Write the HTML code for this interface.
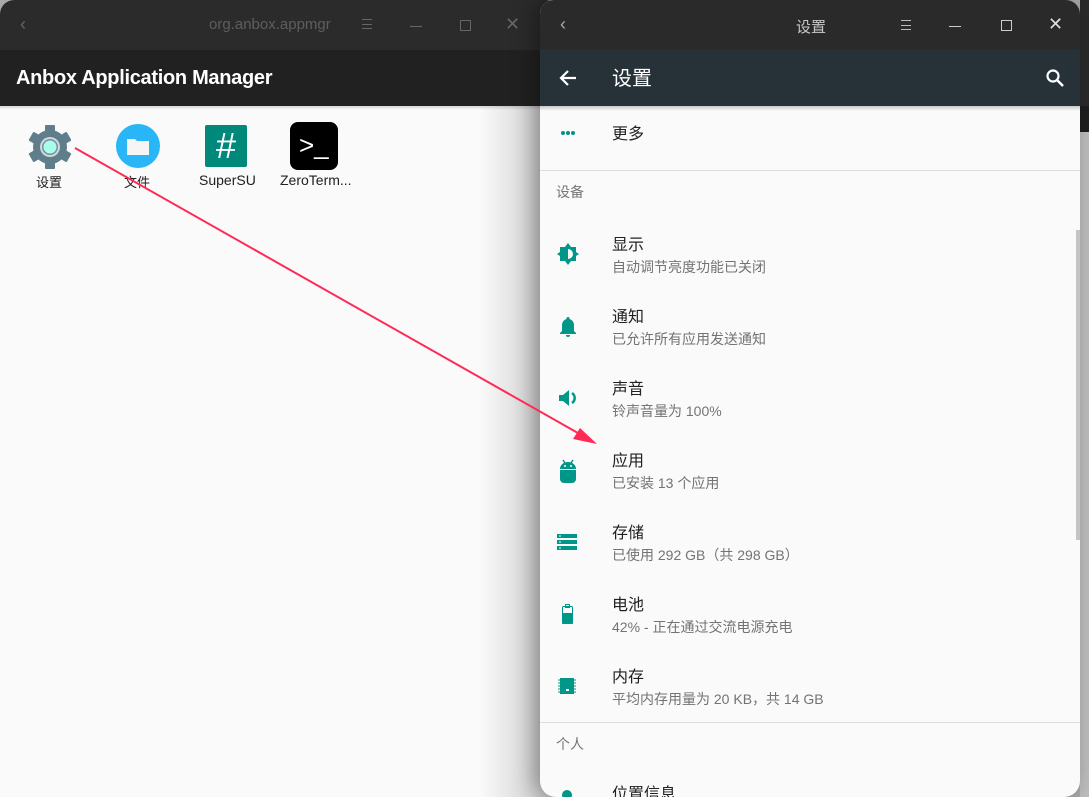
<!DOCTYPE html>
<html><head><meta charset="utf-8"><style>
*{margin:0;padding:0;box-sizing:border-box}
body{width:1089px;height:797px;overflow:hidden;background:#a8a8a8;font-family:"Liberation Sans","Noto Sans CJK SC",sans-serif;position:relative}
.abs{position:absolute}
.lw{left:0;top:0;width:560px;height:797px;background:#fafafa;border-radius:14px 14px 0 0;overflow:hidden}
.tb{left:0;top:0;height:50px;background:#2b2b2b;width:100%}
.rw{left:540px;top:0;width:540px;height:797px;background:#fafafa;border-radius:14px 14px 16px 16px;overflow:hidden;box-shadow:-6px 0 22px rgba(0,0,0,.35)}
.t{font-size:16px;color:#212121;left:72px;line-height:20px}
.s{font-size:14px;color:#737373;left:72px;line-height:18px}
.h{font-size:14px;color:#757575;left:16px}
</style></head><body>
<div class="abs" style="left:1080px;top:0;width:9px;height:106px;background:#2a2a2a"></div>
<div class="abs" style="left:1080px;top:106px;width:9px;height:26px;background:#1e1e1e"></div>
<div class="abs" style="left:1080px;top:132px;width:9px;height:665px;background:#bdbdbd"></div>

<div class="abs lw">
 <div class="abs tb"></div>
 <div class="abs" style="left:20px;top:14px;color:#666;font-size:18px">&#8249;</div>
 <div class="abs" style="left:209px;top:16px;color:#5e5e5e;font-size:15px">org.anbox.appmgr</div>
 <div class="abs" style="left:362px;top:19px;width:10px;height:10px;border-top:1px solid #666;border-bottom:1px solid #666"></div>
 <div class="abs" style="left:362px;top:24px;width:10px;height:1px;background:#666"></div>
 <div class="abs" style="left:410px;top:26px;width:12px;height:1px;background:#666"></div>
 <div class="abs" style="left:460px;top:20px;width:11px;height:11px;border:1px solid #666"></div>
 <div class="abs" style="left:505px;top:14px;color:#666;font-size:18px">&#10005;</div>
 <div class="abs" style="left:0;top:50px;width:100%;height:56px;background:#212121"></div>
 <div class="abs" style="left:16px;top:67px;color:#fff;font-size:20px;font-weight:bold;letter-spacing:-.3px">Anbox Application Manager</div>
 <div class="abs" style="left:0;top:106px;width:100%;height:4px;background:linear-gradient(rgba(0,0,0,.15),rgba(0,0,0,0))"></div>
 <div class="abs" style="left:480px;top:106px;width:80px;height:691px;background:linear-gradient(90deg,rgba(0,0,0,0),rgba(0,0,0,.22))"></div>
 <svg class="abs" style="left:27px;top:124px" width="46" height="46" viewBox="0 0 46 46">
  <g fill="#607d8b" transform="translate(23 23)">
   <circle r="17"/>
   <g id="tt"><rect x="-5" y="-22" width="10" height="9" rx="1"/></g>
   <use href="#tt" transform="rotate(60)"/><use href="#tt" transform="rotate(120)"/><use href="#tt" transform="rotate(180)"/><use href="#tt" transform="rotate(240)"/><use href="#tt" transform="rotate(300)"/>
  </g>
  <circle cx="23" cy="23" r="10" fill="#cfd8dc"/><circle cx="23" cy="23" r="8" fill="#78909c"/><circle cx="23" cy="23" r="6.5" fill="#a7ffeb"/>
 </svg>
 <div class="abs" style="left:36px;top:172px;font-size:13px;color:#212121">设置</div>
 <div class="abs" style="left:116px;top:124px;width:44px;height:44px;border-radius:50%;background:#29b6f6"></div>
 <svg class="abs" style="left:126px;top:136px" width="24" height="20"><path d="M1 3h8l2 2h12v14H1z" fill="#f5f5f5"/></svg>
 <div class="abs" style="left:124px;top:172px;font-size:13px;color:#212121">文件</div>
 <div class="abs" style="left:205px;top:125px;width:42px;height:42px;background:#00897b;border-radius:2px;color:#fff;font-size:36px;text-align:center;line-height:42px">#</div>
 <div class="abs" style="left:199px;top:172px;font-size:14px;color:#212121">SuperSU</div>
 <div class="abs" style="left:290px;top:122px;width:48px;height:48px;background:#000;border-radius:8px;color:#fff;font-size:26px;line-height:46px;padding-left:9px">&gt;_</div>
 <div class="abs" style="left:280px;top:172px;font-size:14px;color:#212121">ZeroTerm...</div>
</div>

<div class="abs rw">
 <div class="abs tb" style="background:#2a2a2a"></div>
 <div class="abs" style="left:20px;top:14px;color:#aaa;font-size:18px">&#8249;</div>
 <div class="abs" style="left:256px;top:16px;color:#c8c8c8;font-size:15px">设置</div>
 <div class="abs" style="left:361px;top:20px;width:10px;height:10px;border-top:1px solid #bbb;border-bottom:1px solid #bbb"></div>
 <div class="abs" style="left:361px;top:25px;width:10px;height:1px;background:#bbb"></div>
 <div class="abs" style="left:409px;top:26px;width:12px;height:1px;background:#ccc"></div>
 <div class="abs" style="left:461px;top:20px;width:11px;height:11px;border:1px solid #ccc"></div>
 <div class="abs" style="left:508px;top:14px;color:#ddd;font-size:18px">&#10005;</div>
 <div class="abs" style="left:0;top:50px;width:100%;height:56px;background:#263238"></div>
 <svg class="abs" style="left:18px;top:68px" width="20" height="20" viewBox="0 0 20 20"><path d="M18 10H3M10 3l-7 7 7 7" stroke="#fff" stroke-width="2.2" fill="none"/></svg>
 <div class="abs" style="left:72px;top:65px;color:#fff;font-size:20px;line-height:28px">设置</div>
 <svg class="abs" style="left:505px;top:68px" width="20" height="20" viewBox="0 0 20 20"><circle cx="8" cy="8" r="5.5" stroke="#fff" stroke-width="2.2" fill="none"/><path d="M12 12l6 6" stroke="#fff" stroke-width="2.5"/></svg>
 <div class="abs" style="left:0;top:106px;width:100%;height:5px;background:linear-gradient(rgba(0,0,0,.2),rgba(0,0,0,0))"></div>

 <svg class="abs" style="left:20px;top:130px" width="16" height="6"><circle cx="3" cy="3" r="2" fill="#009688"/><circle cx="8" cy="3" r="2" fill="#009688"/><circle cx="13" cy="3" r="2" fill="#009688"/></svg>
 <div class="abs t" style="top:125px">更多</div>
 <div class="abs" style="left:0;top:170px;width:100%;height:1px;background:#ddd"></div>
 <div class="abs h" style="top:182px">设备</div>

 <svg class="abs" style="left:16px;top:242px" width="24" height="24" viewBox="0 0 24 24"><path d="M12 1l3 4h5v5l3 2-3 2v5h-5l-3 4-3-4H4v-5l-3-2 3-2V5h5z" fill="#009688"/><path d="M12 7a5 5 0 010 10z" fill="#fafafa"/></svg>
 <div class="abs t" style="top:236px">显示</div><div class="abs s" style="top:258px">自动调节亮度功能已关闭</div>

 <svg class="abs" style="left:18px;top:316px" width="20" height="22" viewBox="0 0 20 22"><path d="M10 1a1.5 1.5 0 011.5 1.5V3A6 6 0 0116 9v6l2 2v1H2v-1l2-2V9a6 6 0 014.5-6v-.5A1.5 1.5 0 0110 1zM8 19h4a2 2 0 01-4 0z" fill="#009688"/></svg>
 <div class="abs t" style="top:308px">通知</div><div class="abs s" style="top:330px">已允许所有应用发送通知</div>

 <svg class="abs" style="left:18px;top:388px" width="22" height="20" viewBox="0 0 22 20"><path d="M1 7h4l6-5v16l-6-5H1z" fill="#009688"/><path d="M14 5a6 6 0 010 10" stroke="#009688" stroke-width="2.5" fill="none"/></svg>
 <div class="abs t" style="top:380px">声音</div><div class="abs s" style="top:402px">铃声音量为 100%</div>

 <svg class="abs" style="left:19px;top:459px" width="18" height="24" viewBox="0 0 18 24"><path d="M4 1l2 3M14 1l-2 3" stroke="#009688" stroke-width="1.5"/><path d="M1 10a8 7 0 0116 0z" fill="#009688"/><path d="M1 11h16v9a4 4 0 01-4 4H5a4 4 0 01-4-4z" fill="#009688"/><circle cx="6" cy="7" r="1" fill="#fafafa"/><circle cx="12" cy="7" r="1" fill="#fafafa"/></svg>
 <div class="abs t" style="top:452px">应用</div><div class="abs s" style="top:474px">已安装 13 个应用</div>

 <svg class="abs" style="left:17px;top:534px" width="20" height="16"><rect y="0" width="20" height="4" fill="#009688"/><rect y="6" width="20" height="4" fill="#009688"/><rect y="12" width="20" height="4" fill="#009688"/><rect x="2" y="1.5" width="2" height="1" fill="#fff"/><rect x="2" y="7.5" width="2" height="1" fill="#fff"/><rect x="2" y="13.5" width="2" height="1" fill="#fff"/></svg>
 <div class="abs t" style="top:524px">存储</div><div class="abs s" style="top:546px">已使用 292 GB（共 298 GB）</div>

 <svg class="abs" style="left:22px;top:604px" width="12" height="20"><rect x="3.5" y="0.5" width="4" height="3" fill="none" stroke="#009688"/><rect x="0.5" y="2.5" width="10" height="17" rx="1" fill="none" stroke="#009688"/><rect x="0" y="9" width="11" height="11" rx="1" fill="#009688"/></svg>
 <div class="abs t" style="top:596px">电池</div><div class="abs s" style="top:618px">42% - 正在通过交流电源充电</div>

 <svg class="abs" style="left:18px;top:677px" width="18" height="18"><rect x="2" y="1" width="14" height="16" fill="#009688"/><path d="M0 3h2M0 6h2M0 9h2M0 12h2M0 15h2M16 3h2M16 6h2M16 9h2M16 12h2M16 15h2" stroke="#009688"/><rect x="8" y="12" width="3" height="2" fill="#fff"/></svg>
 <div class="abs t" style="top:668px">内存</div><div class="abs s" style="top:690px">平均内存用量为 20 KB，共 14 GB</div>

 <div class="abs" style="left:0;top:722px;width:100%;height:1px;background:#ddd"></div>
 <div class="abs h" style="top:734px">个人</div>
 <div class="abs" style="left:22px;top:790px;width:10px;height:10px;border-radius:50%;background:#009688"></div>
 <div class="abs t" style="top:785px">位置信息</div>
 <div class="abs" style="left:536px;top:230px;width:4px;height:310px;background:#c4c4c4"></div>
</div>

<svg class="abs" style="left:0;top:0" width="1089" height="797">
 <line x1="75" y1="148" x2="585" y2="437" stroke="#ff2a55" stroke-width="2"/>
 <path d="M597 444L573 439L580 428Z" fill="#ff2a55"/>
</svg>
</body></html>
